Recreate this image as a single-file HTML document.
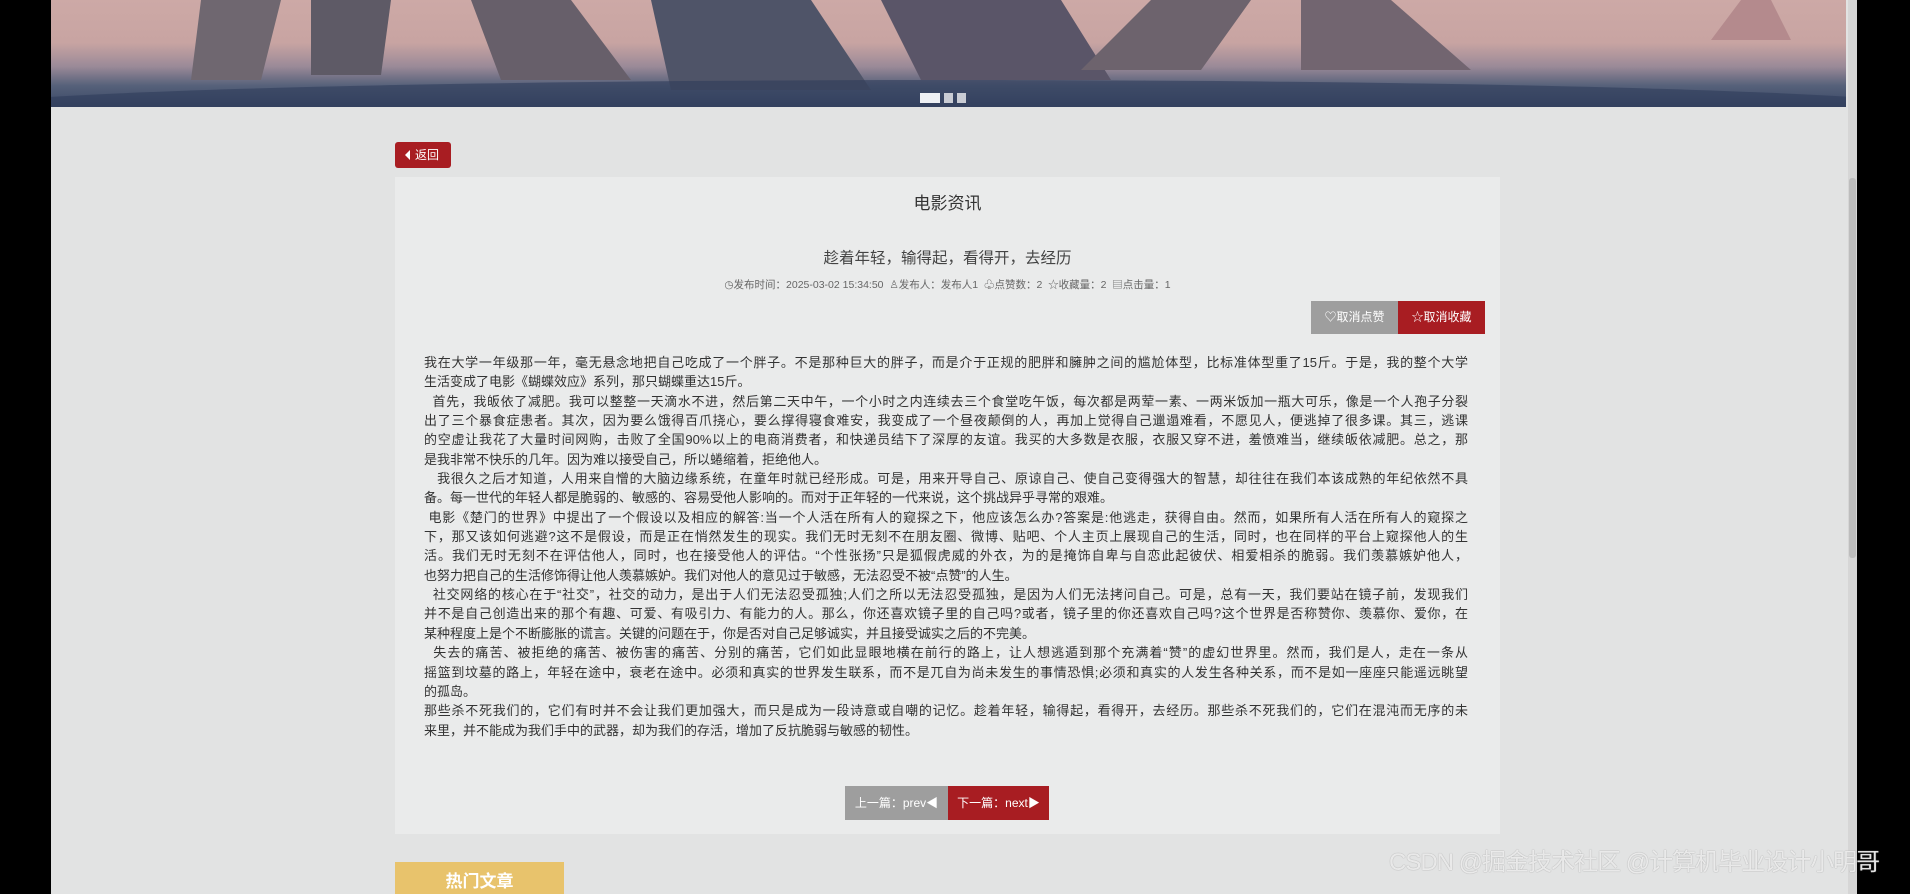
<!DOCTYPE html>
<html><head><meta charset="utf-8">
<style>
*{margin:0;padding:0;box-sizing:border-box}
html,body{width:1910px;height:894px;overflow:hidden;background:#000}
body{font-family:"Liberation Sans","Noto Sans CJK SC",sans-serif;position:relative}
#page{position:absolute;left:51px;top:0;width:1806px;height:894px;background:#e2e3e3;overflow:hidden}
#sb{position:absolute;left:1797px;top:0;width:9px;height:894px;background:#d6d6d6}
#sb i{position:absolute;left:1px;top:178px;width:7px;height:380px;background:#bdbdbd;border-radius:3px}
#banner{position:absolute;left:0;top:0;width:1795px;height:107px;overflow:hidden;
background:linear-gradient(180deg,#cda9a6 0%,#c8a4a2 40%,#9b8a98 62%,#56617a 80%,#3a4866 100%)}
.p{position:absolute}
.dots{position:absolute;left:869px;top:93px}
.dots b{display:inline-block;height:10px;margin-right:4px;background:#c9ccd4;vertical-align:top}
.back{position:absolute;left:344px;top:142px;width:56px;height:26px;background:#a81d22;border-radius:3px;color:#fff;font-size:12px;line-height:26px;padding-left:10px}
.back:before{content:"";display:inline-block;border-right:5px solid #fff;border-top:5px solid transparent;border-bottom:5px solid transparent;margin-right:5px;vertical-align:-1px}
.card{position:absolute;left:344px;top:177px;width:1105px;height:657px;background:#eaebeb}
.t1{position:absolute;top:12px;width:100%;text-align:center;font-size:17px;color:#333}
.t2{position:absolute;top:69px;width:100%;text-align:center;font-size:15.5px;color:#444}
.meta{position:absolute;top:100px;width:100%;text-align:center;font-size:10.5px;color:#666}
.btns{position:absolute;left:916px;top:124px;width:174px;height:33px}
.btns span{float:left;height:33px;line-height:33px;color:#fff;font-size:12px;text-align:center}
.txt{position:absolute;left:29px;top:176px;width:1044px;font-size:13px;color:#333}
.txt div{height:19.35px;line-height:19.35px;white-space:nowrap;text-align:justify;text-align-last:justify}
.txt div.e{text-align-last:left}
.pg{position:absolute;left:450px;top:609px;width:205px;height:34px}
.pg span{float:left;height:34px;line-height:34px;color:#fff;font-size:12px;text-align:center}
.hot{position:absolute;left:344px;top:862px;width:169px;height:40px;background:#e8c36c;color:#fff;font-size:17px;font-weight:bold;text-align:center;line-height:40px}
.wm{position:absolute;left:1389px;top:842px;font-size:24px;color:rgba(255,255,255,0.8);text-shadow:0 0 1px #888;white-space:nowrap;letter-spacing:-1px}
</style></head><body>
<div id="page">
 <div id="banner">
  <svg class="p" width="1795" height="107" style="left:0;top:0">
   <polygon points="150,0 230,0 210,80 140,80" fill="#6f6770"/>
   <polygon points="260,0 340,0 330,75 260,75" fill="#5e5a66"/>
   <polygon points="420,0 520,0 580,80 450,80" fill="#675f6a"/>
   <polygon points="600,0 760,0 820,90 620,90" fill="#4f5468"/>
   <polygon points="830,0 1010,0 1060,80 870,80" fill="#5a5568"/>
   <polygon points="1100,0 1200,0 1150,70 1030,70" fill="#6d636d"/>
   <polygon points="1250,0 1340,0 1420,70 1250,70" fill="#726570"/>
   <polygon points="1690,0 1720,0 1740,40 1660,40" fill="#b48a8d"/>
   <ellipse cx="900" cy="110" rx="1000" ry="30" fill="#2f3c5a" opacity=".6"/>
  </svg>
  <div class="dots"><b style="width:20px;background:#eef0f4"></b><b style="width:9px"></b><b style="width:9px"></b></div>
 </div>
 <div class="back">返回</div>
 <div class="card">
  <div class="t1">电影资讯</div>
  <div class="t2">趁着年轻，输得起，看得开，去经历</div>
  <div class="meta">◷发布时间：2025-03-02 15:34:50 &nbsp;♙发布人：发布人1 &nbsp;♧点赞数：2 &nbsp;☆收藏量：2 &nbsp;▤点击量：1</div>
  <div class="btns"><span style="width:87px;background:#9e9e9e">♡取消点赞</span><span style="width:87px;background:#a81d22">☆取消收藏</span></div>
  <div class="txt">
<div>我在大学一年级那一年，毫无悬念地把自己吃成了一个胖子。不是那种巨大的胖子，而是介于正规的肥胖和臃肿之间的尴尬体型，比标准体型重了15斤。于是，我的整个大学</div>
<div class="e">生活变成了电影《蝴蝶效应》系列，那只蝴蝶重达15斤。</div>
<div>&nbsp;&nbsp;首先，我皈依了减肥。我可以整整一天滴水不进，然后第二天中午，一个小时之内连续去三个食堂吃午饭，每次都是两荤一素、一两米饭加一瓶大可乐，像是一个人孢子分裂</div>
<div>出了三个暴食症患者。其次，因为要么饿得百爪挠心，要么撑得寝食难安，我变成了一个昼夜颠倒的人，再加上觉得自己邋遢难看，不愿见人，便逃掉了很多课。其三，逃课</div>
<div>的空虚让我花了大量时间网购，击败了全国90%以上的电商消费者，和快递员结下了深厚的友谊。我买的大多数是衣服，衣服又穿不进，羞愤难当，继续皈依减肥。总之，那</div>
<div class="e">是我非常不快乐的几年。因为难以接受自己，所以蜷缩着，拒绝他人。</div>
<div>&nbsp;&nbsp;&nbsp;我很久之后才知道，人用来自憎的大脑边缘系统，在童年时就已经形成。可是，用来开导自己、原谅自己、使自己变得强大的智慧，却往往在我们本该成熟的年纪依然不具</div>
<div class="e">备。每一世代的年轻人都是脆弱的、敏感的、容易受他人影响的。而对于正年轻的一代来说，这个挑战异乎寻常的艰难。</div>
<div>&nbsp;电影《楚门的世界》中提出了一个假设以及相应的解答:当一个人活在所有人的窥探之下，他应该怎么办?答案是:他逃走，获得自由。然而，如果所有人活在所有人的窥探之</div>
<div>下，那又该如何逃避?这不是假设，而是正在悄然发生的现实。我们无时无刻不在朋友圈、微博、贴吧、个人主页上展现自己的生活，同时，也在同样的平台上窥探他人的生</div>
<div>活。我们无时无刻不在评估他人，同时，也在接受他人的评估。“个性张扬”只是狐假虎威的外衣，为的是掩饰自卑与自恋此起彼伏、相爱相杀的脆弱。我们羡慕嫉妒他人，</div>
<div class="e">也努力把自己的生活修饰得让他人羡慕嫉妒。我们对他人的意见过于敏感，无法忍受不被“点赞”的人生。</div>
<div>&nbsp;&nbsp;社交网络的核心在于“社交”，社交的动力，是出于人们无法忍受孤独;人们之所以无法忍受孤独，是因为人们无法拷问自己。可是，总有一天，我们要站在镜子前，发现我们</div>
<div>并不是自己创造出来的那个有趣、可爱、有吸引力、有能力的人。那么，你还喜欢镜子里的自己吗?或者，镜子里的你还喜欢自己吗?这个世界是否称赞你、羡慕你、爱你，在</div>
<div class="e">某种程度上是个不断膨胀的谎言。关键的问题在于，你是否对自己足够诚实，并且接受诚实之后的不完美。</div>
<div>&nbsp;&nbsp;失去的痛苦、被拒绝的痛苦、被伤害的痛苦、分别的痛苦，它们如此显眼地横在前行的路上，让人想逃遁到那个充满着“赞”的虚幻世界里。然而，我们是人，走在一条从</div>
<div>摇篮到坟墓的路上，年轻在途中，衰老在途中。必须和真实的世界发生联系，而不是兀自为尚未发生的事情恐惧;必须和真实的人发生各种关系，而不是如一座座只能遥远眺望</div>
<div class="e">的孤岛。</div>
<div>那些杀不死我们的，它们有时并不会让我们更加强大，而只是成为一段诗意或自嘲的记忆。趁着年轻，输得起，看得开，去经历。那些杀不死我们的，它们在混沌而无序的未</div>
<div class="e">来里，并不能成为我们手中的武器，却为我们的存活，增加了反抗脆弱与敏感的韧性。</div>
  </div>
  <div class="pg"><span style="width:103px;background:#9e9e9e">上一篇：prev◀</span><span style="width:101px;background:#a81d22">下一篇：next▶</span></div>
 </div>
 <div class="hot">热门文章</div>
 <div id="sb"><i></i></div>
</div>
<div class="wm">CSDN @掘金技术社区 @计算机毕业设计小明哥</div>
</body></html>
